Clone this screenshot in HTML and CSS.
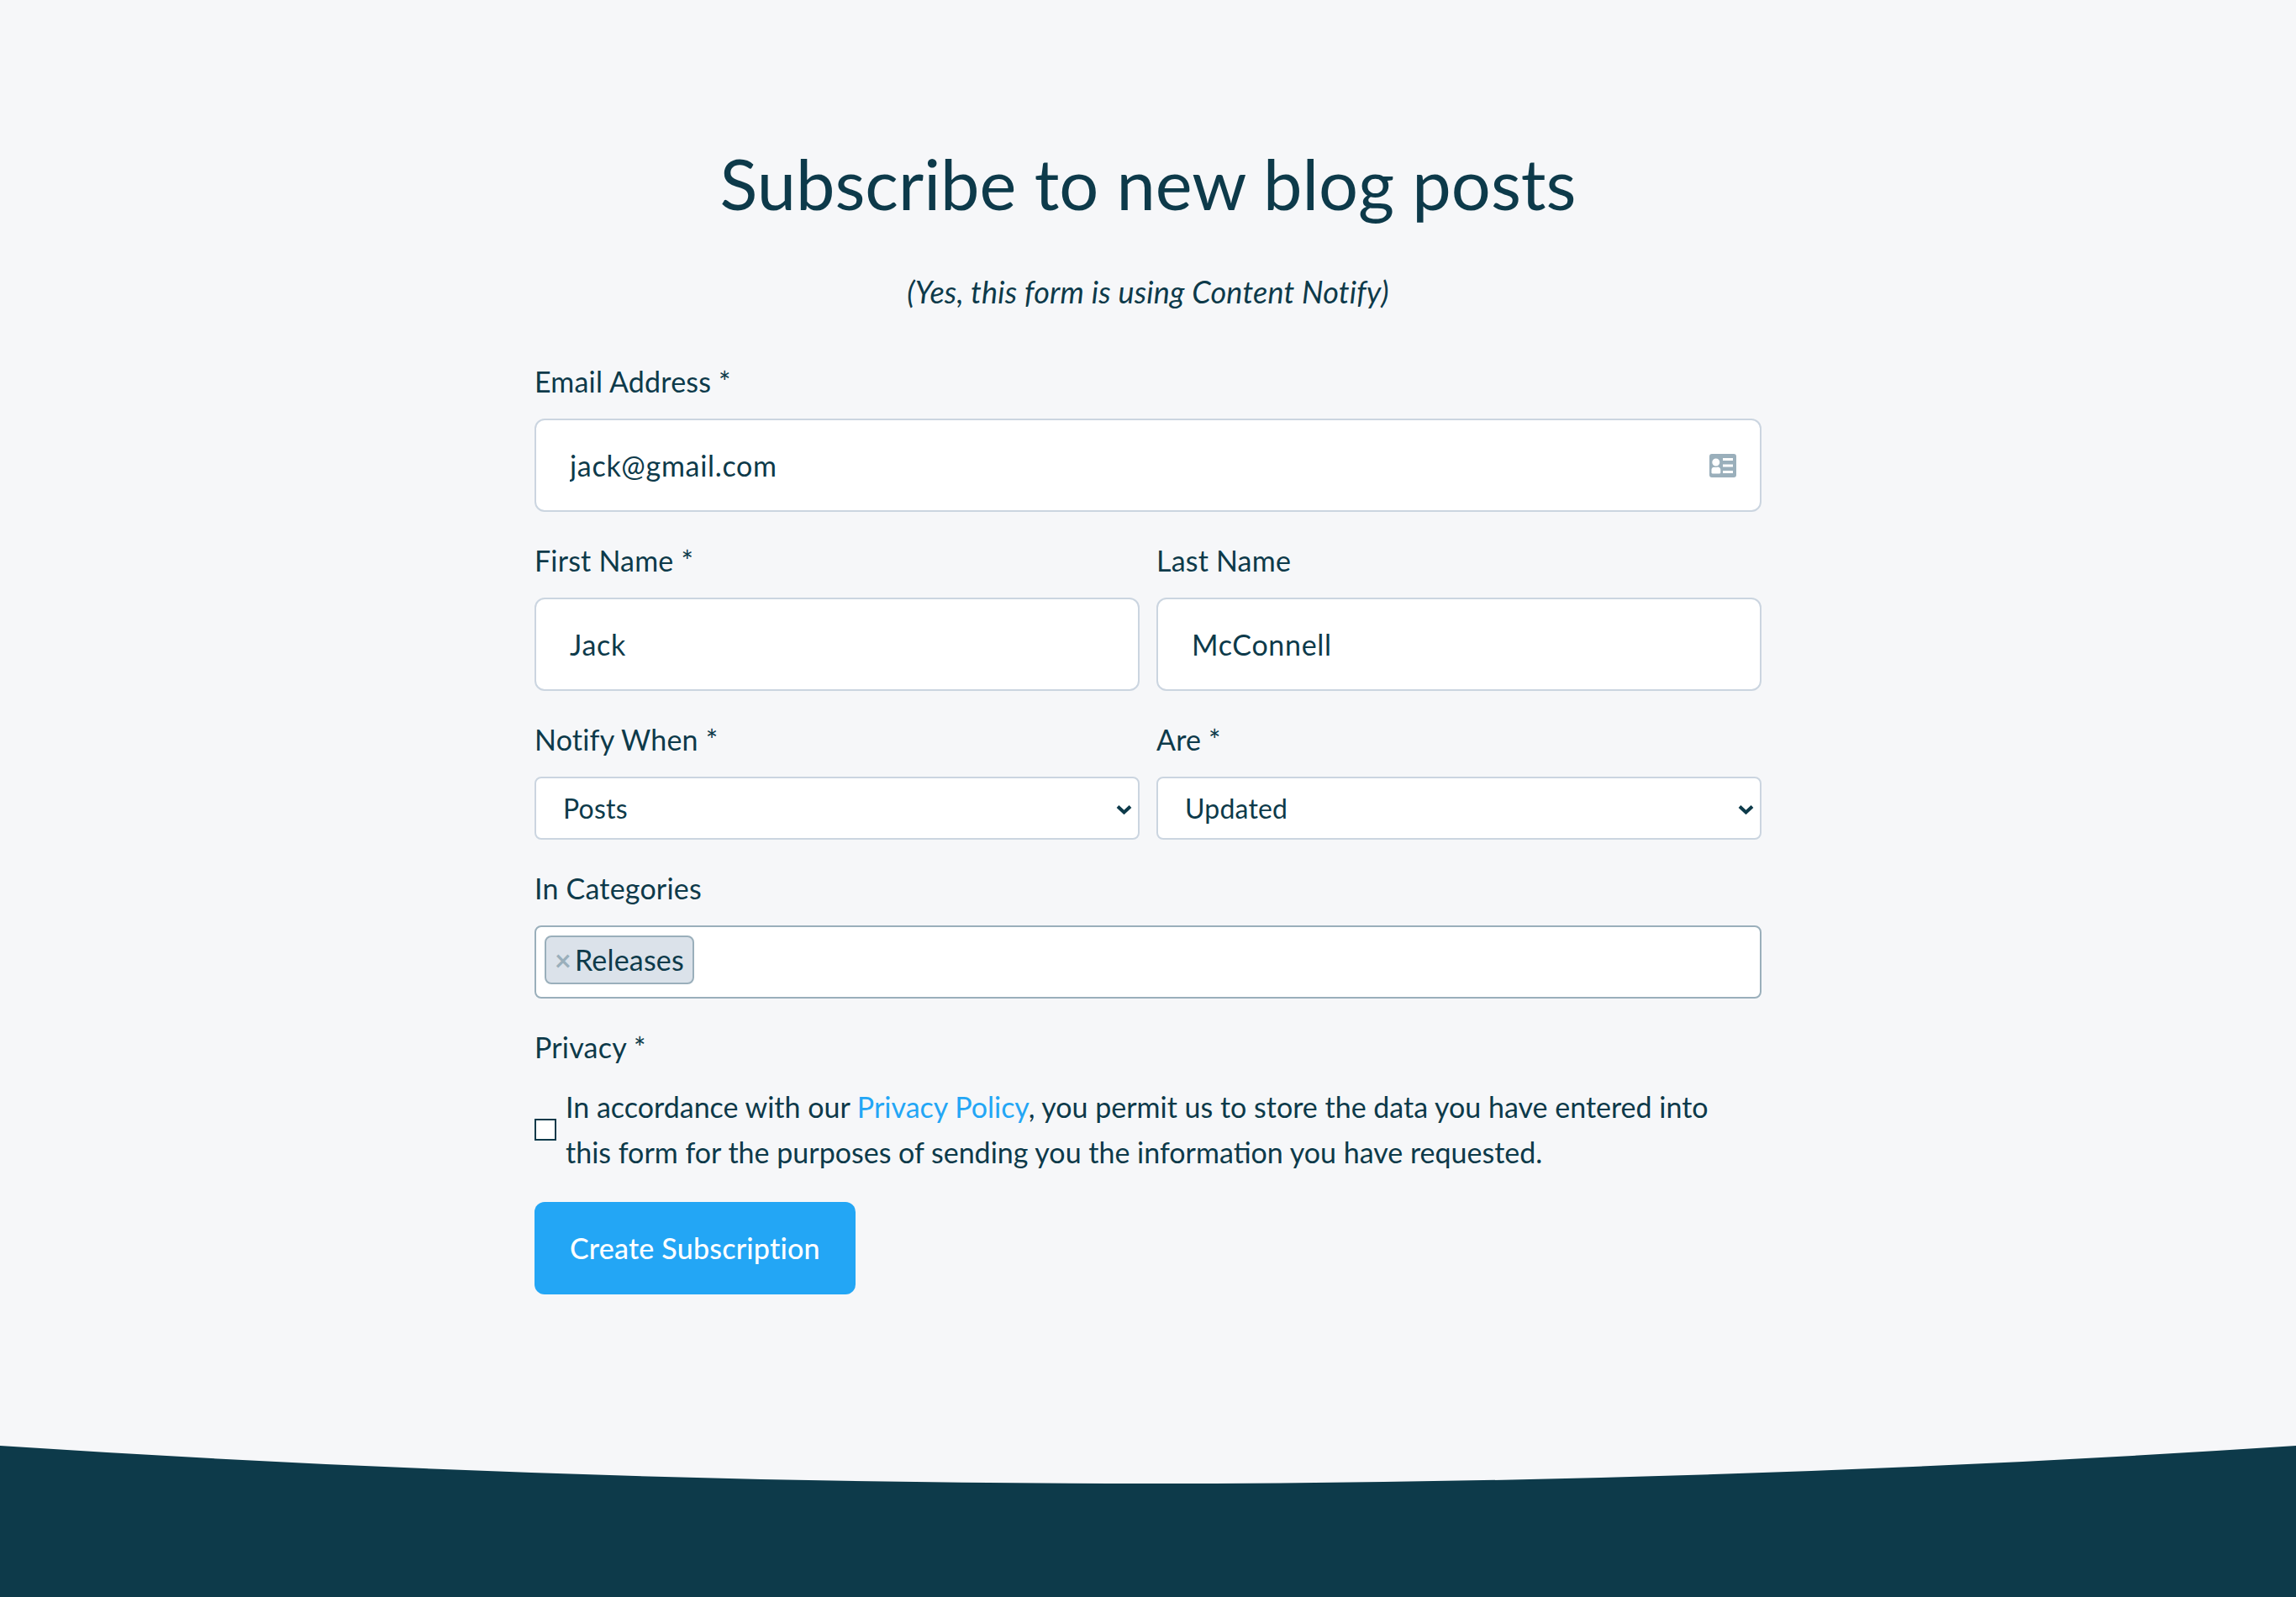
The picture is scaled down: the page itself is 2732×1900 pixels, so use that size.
FILE: index.html
```html
<!DOCTYPE html>
<html lang="en">
<head>
    <meta charset="UTF-8">
    <meta name="viewport" content="width=device-width, initial-scale=1.0">
    <title>Subscribe to new blog posts</title>
    <link rel="stylesheet" href="styles.css">
</head>
<body>

    <main class="subscribe">
        <h1>Subscribe to new blog posts</h1>
        <p class="subtitle">(Yes, this form is using Content Notify)</p>

        <form class="subscribe-form">
            <div class="field">
                <label for="email">Email Address *</label>
                <div class="input-wrap">
                    <input type="text" id="email" value="jack@gmail.com">
                    <svg class="card-icon" viewBox="0 0 32 28" aria-hidden="true">
                        <path fill-rule="evenodd" d="M3 0h26a3 3 0 0 1 3 3v22a3 3 0 0 1-3 3H3a3 3 0 0 1-3-3V3a3 3 0 0 1 3-3zM7.800 5.500a4.500 4.500 0 1 0 0 9 4.500 4.500 0 0 0 0-9zM5.500 15.500c-1.800.4-3 1.800-3 3.600v3.200c0 .6.500 1.200 1.200 1.200h8.400c.7 0 1.200-.6 1.200-1.200v-3.200c0-1.800-1.200-3.200-3-3.600-1.400.6-3.400.6-4.800 0zM16 5v3h12V5zM16 12.500v3h12v-3zM16 20v3h12v-3z"/>
                    </svg>
                </div>
            </div>

            <div class="field-row">
                <div class="field">
                    <label for="first-name">First Name *</label>
                    <input type="text" id="first-name" value="Jack">
                </div>
                <div class="field">
                    <label for="last-name">Last Name</label>
                    <input type="text" id="last-name" value="McConnell">
                </div>
            </div>

            <div class="field-row">
                <div class="field">
                    <label for="notify">Notify When *</label>
                    <div class="select-wrap">
                        <select id="notify">
                            <option>Posts</option>
                        </select>
                        <svg class="chevron" viewBox="0 0 19 12" aria-hidden="true"><path d="M2 2.500l7.500 7 7.500-7"/></svg>
                    </div>
                </div>
                <div class="field">
                    <label for="are">Are *</label>
                    <div class="select-wrap">
                        <select id="are">
                            <option>Updated</option>
                        </select>
                        <svg class="chevron" viewBox="0 0 19 12" aria-hidden="true"><path d="M2 2.500l7.500 7 7.500-7"/></svg>
                    </div>
                </div>
            </div>

            <div class="field">
                <label>In Categories</label>
                <div class="tag-box">
                    <span class="tag"><span class="tag-remove">×</span>Releases</span>
                </div>
            </div>

            <div class="field privacy">
                <label>Privacy *</label>
                <div class="consent">
                    <input type="checkbox" id="consent">
                    <span>In accordance with our <a href="#">Privacy Policy</a>, you permit us to store the data you have entered into this form for the purposes of sending you the information you have requested.</span>
                </div>
            </div>

            <button type="button" class="submit">Create Subscription</button>
        </form>
    </main>

    <footer class="site-footer">
        <svg class="footer-curve" viewBox="0 0 2732 45" preserveAspectRatio="none" aria-hidden="true">
            <path d="M0 0Q1366 90 2732 0V45H0z"/>
        </svg>
        <div class="footer-body"></div>
    </footer>

</body>
</html>
```

FILE: styles.css
```css
* {
    box-sizing: border-box;
}

body {
    font-family: 'Lato', sans-serif;
    background-color: #f6f7f9;
    color: #0d3a4a;
    margin: 0;
    font-size: 34px;
    letter-spacing: 0.2px;
}

.subscribe {
    width: 1460px;
    height: 1720px;
    margin: 0 auto;
    padding-top: 168px;
}

h1 {
    font-size: 83px;
    font-weight: 400;
    line-height: 100px;
    letter-spacing: 0;
    text-align: center;
    margin: 0;
}

.subtitle {
    font-size: 36px;
    font-style: italic;
    line-height: 44px;
    text-align: center;
    margin: 57px 0 64px;
}

.field {
    margin-bottom: 37px;
}

.field-row {
    display: grid;
    grid-template-columns: 1fr 1fr;
    column-gap: 20px;
}

label {
    display: block;
    line-height: 42px;
    margin-bottom: 23px;
}

input[type="text"],
select {
    display: block;
    width: 100%;
    font-family: inherit;
    font-size: inherit;
    letter-spacing: inherit;
    color: inherit;
    background-color: #fff;
    border: 2px solid #cbd5e0;
    outline: none;
}

input[type="text"] {
    height: 111px;
    padding: 0 40px;
    letter-spacing: 0.700px;
    border-radius: 12px;
}

.input-wrap,
.select-wrap {
    position: relative;
}

.card-icon {
    position: absolute;
    right: 30px;
    top: 42px;
    width: 32px;
    height: 28px;
    fill: #9aafbb;
}

select {
    appearance: none;
    height: 75px;
    padding: 0 32px;
    font-size: 32px;
    border-radius: 8px;
}

.chevron {
    position: absolute;
    right: 9px;
    top: 33px;
    width: 19px;
    height: 12px;
    fill: none;
    stroke: #0d3a4a;
    stroke-width: 4;
}

.tag-box {
    height: 87px;
    padding: 10px;
    background-color: #fff;
    border: 2px solid #9aafbb;
    border-radius: 8px;
}

.tag {
    display: inline-flex;
    align-items: center;
    height: 58px;
    padding: 0 10px 2px;
    background-color: #dbe2ea;
    border: 2px solid #9aafbb;
    border-radius: 8px;
}

.tag-remove {
    color: #9aafbb;
    font-weight: 700;
    margin-right: 4px;
}

.privacy {
    margin-bottom: 32px;
}

.consent {
    display: flex;
    align-items: center;
    padding-right: 40px;
    line-height: 54px;
    letter-spacing: 0;
}

.consent input {
    appearance: none;
    flex-shrink: 0;
    width: 26px;
    height: 26px;
    margin: 0 11px 0 0;
    background-color: #fff;
    border: 2px solid #0d3a4a;
}

a {
    color: #23a6f5;
    text-decoration: none;
}

.submit {
    display: block;
    height: 110px;
    padding: 0 42px 2px;
    font-family: inherit;
    font-size: inherit;
    letter-spacing: inherit;
    font-weight: 500;
    color: #fff;
    background-color: #23a6f5;
    border: none;
    border-radius: 12px;
}

.footer-curve {
    display: block;
    width: 100%;
    height: 45px;
    fill: #0d3a4a;
}

.footer-body {
    height: 135px;
    background-color: #0d3a4a;
}
```
